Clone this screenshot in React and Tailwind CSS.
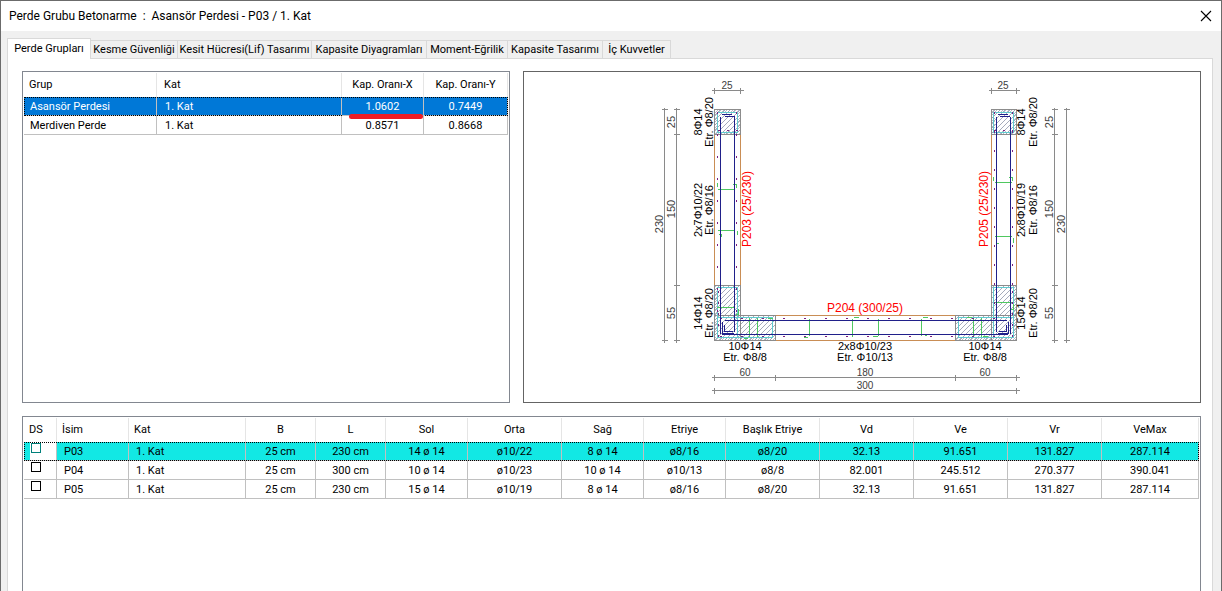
import React, { useState } from 'react';
import clsx from 'clsx';

const tabs = [
  { label: 'Perde Grupları', width: 'w-[84px]' },
  { label: 'Kesme Güvenliği', width: 'w-[87px]' },
  { label: 'Kesit Hücresi(Lif) Tasarımı', width: 'w-[134px]' },
  { label: 'Kapasite Diyagramları', width: 'w-[115px]' },
  { label: 'Moment-Eğrilik', width: 'w-[81px]' },
  { label: 'Kapasite Tasarımı', width: 'w-[95px]' },
  { label: 'İç Kuvvetler', width: 'w-[68px]' },
];

const groups = [
  { name: 'Asansör Perdesi', floor: '1. Kat', x: '1.0602', y: '0.7449' },
  { name: 'Merdiven Perde', floor: '1. Kat', x: '0.8571', y: '0.8668' },
];

const columns = [
  { label: 'DS', width: 'w-[33px]' },
  { label: 'İsim', width: 'w-[72px]' },
  { label: 'Kat', width: 'w-[117px]' },
  { label: 'B', width: 'w-[70px]' },
  { label: 'L', width: 'w-[70px]' },
  { label: 'Sol', width: 'w-[82px]' },
  { label: 'Orta', width: 'w-[94px]' },
  { label: 'Sağ', width: 'w-[82px]' },
  { label: 'Etriye', width: 'w-[82px]' },
  { label: 'Başlık Etriye', width: 'w-[94px]' },
  { label: 'Vd', width: 'w-[94px]' },
  { label: 'Ve', width: 'w-[94px]' },
  { label: 'Vr', width: 'w-[94px]' },
  { label: 'VeMax', width: 'w-[97px]' },
];

const walls = [
  ['P03', '1. Kat', '25 cm', '230 cm', '14 ø 14', 'ø10/22', '8 ø 14', 'ø8/16', 'ø8/20', '32.13', '91.651', '131.827', '287.114'],
  ['P04', '1. Kat', '25 cm', '300 cm', '10 ø 14', 'ø10/23', '10 ø 14', 'ø10/13', 'ø8/8', '82.001', '245.512', '270.377', '390.041'],
  ['P05', '1. Kat', '25 cm', '230 cm', '15 ø 14', 'ø10/19', '8 ø 14', 'ø8/16', 'ø8/20', '32.13', '91.651', '131.827', '287.114'],
];

const GroupTable = () => {
  const [selected, setSelected] = useState(0);

  return (
    <div className="border border-[#828790] bg-white p-px h-[332px]">
      <table className="w-full table-fixed border-separate border-spacing-0">
        <thead>
          <tr className="h-6">
            <th className="w-[133px] border-r border-[#e5e5e5] px-[5px] text-left font-normal">Grup</th>
            <th className="border-r border-[#e5e5e5] px-[7px] text-left font-normal">Kat</th>
            <th className="w-[82px] border-r border-[#e5e5e5] font-normal">Kap. Oranı-X</th>
            <th className="w-[84px] border-r border-[#e5e5e5] font-normal">Kap. Oranı-Y</th>
          </tr>
        </thead>
        <tbody>
          {groups.map((g, i) => (
            <tr
              key={g.name}
              onClick={() => setSelected(i)}
              className={clsx(
                'h-[19px] leading-4',
                selected === i && 'bg-[#0078d7] text-white outline-1 -outline-offset-1 outline-dotted outline-black'
              )}
            >
              <td className="border-r border-b border-[#c0c0c0] px-1.5 pt-0.5">{g.name}</td>
              <td className="border-r border-b border-[#c0c0c0] px-2 pt-0.5">{g.floor}</td>
              <td className="relative border-r border-b border-[#c0c0c0] pt-0.5 text-center">
                {g.x}
                {i === 0 && (
                  <span className="absolute left-[7px] right-0 -bottom-1 z-10 h-[5px] rounded-sm bg-[#ed1c24]" />
                )}
              </td>
              <td className="border-r border-b border-[#c0c0c0] pt-0.5 text-center">{g.y}</td>
            </tr>
          ))}
        </tbody>
      </table>
    </div>
  );
};

const WallTable = () => {
  const [selected, setSelected] = useState(0);

  return (
    <div className="min-h-0 flex-1 border border-b-0 border-[#828790] bg-white p-px">
      <table className="w-full table-fixed border-separate border-spacing-0">
        <thead>
          <tr className="h-6">
            {columns.map((c, i) => (
              <th
                key={c.label}
                className={clsx(c.width, 'border-r border-[#e5e5e5] font-normal', i < 3 ? 'px-[5px] text-left' : 'text-center')}
              >
                {c.label}
              </th>
            ))}
          </tr>
        </thead>
        <tbody>
          {walls.map((row, i) => (
            <tr
              key={row[0]}
              onClick={() => setSelected(i)}
              className={clsx(
                'h-[19px] leading-4',
                selected === i && 'bg-[#12e8e4] outline-1 -outline-offset-1 outline-dotted outline-black'
              )}
            >
              <td className="border-r border-b border-[#c0c0c0] p-0 pl-1.5 align-top">
                <div className="flex h-[18px] items-start bg-white pt-px pl-px">
                  <input
                    type="checkbox"
                    aria-label={`DS ${row[0]}`}
                    className={clsx(
                      'size-2.5 appearance-none border bg-white checked:bg-black',
                      selected === i ? 'border-[#00807a]' : 'border-black'
                    )}
                  />
                </div>
              </td>
              {row.map((value, j) => (
                <td
                  key={j}
                  className={clsx('border-r border-b border-[#c0c0c0] pt-0.5', j < 2 ? 'px-[7px] text-left' : 'text-center')}
                >
                  {value}
                </td>
              ))}
            </tr>
          ))}
        </tbody>
      </table>
    </div>
  );
};

// Text running upwards, centred on y with its baseline on x
const Upright = ({ x, y, children, ...rest }) => (
  <text transform={`translate(${x} ${y}) rotate(-90)`} textAnchor="middle" {...rest}>
    {children}
  </text>
);

const DimV = ({ x, stops }) => (
  <g>
    <path d={`M${x} ${stops[0] - 2}V${stops[stops.length - 1] + 2}`} />
    {stops.map((y) => (
      <path key={y} d={`M${x - 3} ${y}h6`} />
    ))}
  </g>
);

const DimH = ({ y, stops }) => (
  <g>
    <path d={`M${stops[0] - 3} ${y}H${stops[stops.length - 1] + 3}`} />
    {stops.map((x) => (
      <path key={x} d={`M${x} ${y - 3}v6`} />
    ))}
  </g>
);

const SectionDrawing = () => (
  <div className="h-[332px] border border-[#646464] bg-white">
    <svg viewBox="524 72 676 330" className="h-full w-full" role="img" aria-label="P203 / P204 / P205" fontSize="11">
      <defs>
        <pattern id="hatch" width="5" height="5" patternUnits="userSpaceOnUse">
          <path d="M-1 6L6 -1M-1 1L1 -1M4 6L6 4" stroke="#8e96aa" strokeWidth="0.8" />
        </pattern>
        <pattern id="cover" width="3" height="3" patternUnits="userSpaceOnUse">
          <path d="M-1 4L4 -1" stroke="#9a9fad" strokeWidth="0.7" />
        </pattern>
      </defs>

      {/* concrete outline */}
      <g fill="none" stroke="#c98d55" shapeRendering="crispEdges">
        <path d="M714.5 134V286M740.5 134V286M991.5 134V286M1016.5 134V286" />
        <path d="M775 315.5H956M714 340.5H1017" />
      </g>

      {/* boundary zones */}
      <g fill="url(#hatch)" stroke="#8c8c8c" shapeRendering="crispEdges">
        <path d="M714.5 109.5h26v25h-26zM991.5 109.5h25v25h-25z" />
        <path d="M714.5 285.5h26v55h-26zM991.5 285.5h25v55h-25z" />
        <path d="M740.5 315.5h35v25h-35zM955.5 315.5h36v25h-36z" />
        <path d="M714.5 315.5h26M991.5 315.5h25" />
      </g>
      <g fill="url(#cover)">
        <path fillRule="evenodd" d="M715 110h25v24h-25zM718 113v18h19v-18z" />
        <path fillRule="evenodd" d="M992 110h24v24h-24zM995 113v18h18v-18z" />
        <path d="M715 337h60v3h-60zM956 337h60v3h-60zM715 286h3v50h-3zM1013 286h3v50h-3z" />
      </g>

      {/* closed stirrups */}
      <g fill="none" stroke="#62cbd0" shapeRendering="crispEdges">
        <path d="M717.5 112.5h20v20h-20zM993.5 112.5h20v20h-20z" />
        <path d="M717.5 287.5h20v50h-20zM993.5 287.5h20v50h-20z" />
        <path d="M717.5 317.5h55v20h-55zM958.5 317.5h55v20h-55z" />
      </g>

      {/* web ties */}
      <g fill="none" stroke="#4fc860" shapeRendering="crispEdges">
        <path d="M717.5 183v4M718 189.5h17M733 184.5h3v3" />
        <path d="M718 230.5h17M737.5 231v4M719 234.5h2v2" />
        <path d="M717 307.5h18M738.5 309v5h-3" />
        <path d="M993.5 177v4M995 182.5h17M1009 177.5h3v3" />
        <path d="M995 236.5h17M1013.5 238v5M996.5 240v3h2" />
        <path d="M994 302.5h18M1013.5 304v5h-3" />
        <path d="M749.5 318v19M757.5 318v19M744 338.5h4M768 318.5h5" />
        <path d="M809.5 319v17M804 337.5h4M852.5 319v18M854 317.5h5M878.5 319v17M873 336.5h5" />
        <path d="M921.5 319v17M923 317.5h5M925 335.5h2" />
        <path d="M973.5 318v19M981.5 318v19M967 317.5h5M983 336.5h5" />
      </g>

      {/* bar dots */}
      <g fill="none" stroke="#7c2080" strokeWidth="1" shapeRendering="crispEdges">
        <path d="M717.5 112V316" strokeDasharray="2 20" />
        <path d="M736.5 112V316" strokeDasharray="2 20" />
        <path d="M994.5 112V316" strokeDasharray="2 17" />
        <path d="M1012.5 112V316" strokeDasharray="2 17" />
        <path d="M720 318.5H1010" strokeDasharray="2 19" />
        <path d="M720 336.5H1010" strokeDasharray="2 19" />
        <path d="M718.5 291V338M1012.5 291V338" strokeDasharray="2 9" />
        <path d="M718 130.500H738M994 130.500H1013" strokeDasharray="2 7" />
      </g>

      {/* longitudinal bars */}
      <g fill="none" stroke="#20208a" shapeRendering="crispEdges">
        <path d="M720.5 117V334M734.5 117V332M996.5 117V332M1010.5 117V334" />
        <path d="M725 320.5H1007M722 334.5H1008" />
        <path d="M722 114.5h10M725 116.5h10M998 114.5h10M1000 116.5h10" />
        <path d="M722.5 322v11h11M724.5 325v6h8M1008.5 322v11h-11M1006.5 325v6h-8" />
      </g>

      {/* dimension lines */}
      <g fill="none" stroke="#8a8a8a" shapeRendering="crispEdges">
        <DimV x={664.5} stops={[109.5, 340.5]} />
        <DimV x={676.5} stops={[109.5, 134.5, 285.5, 340.5]} />
        <DimV x={1054.5} stops={[109.5, 134.5, 285.5, 340.5]} />
        <DimV x={1066.5} stops={[109.5, 340.5]} />
        <DimH y={90.5} stops={[714.5, 740.5]} />
        <DimH y={90.5} stops={[991.5, 1016.5]} />
        <DimH y={377.5} stops={[714.5, 775.5, 955.5, 1016.5]} />
        <DimH y={390.5} stops={[714.5, 1016.5]} />
      </g>

      <g fill="#404040">
        <Upright x={675} y={122}>25</Upright>
        <Upright x={675} y={209}>150</Upright>
        <Upright x={675} y={313}>55</Upright>
        <Upright x={663} y={224}>230</Upright>
        <Upright x={1053} y={122}>25</Upright>
        <Upright x={1053} y={209}>150</Upright>
        <Upright x={1053} y={313}>55</Upright>
        <Upright x={1065} y={224}>230</Upright>
        <g textAnchor="middle" fontSize="10">
          <text x="727" y="89">25</text>
          <text x="1003" y="89">25</text>
          <text x="745" y="376">60</text>
          <text x="865" y="376">180</text>
          <text x="985" y="376">60</text>
          <text x="865" y="389">300</text>
        </g>
      </g>

      <g fill="#000">
        <Upright x={702} y={122}>8Φ14</Upright>
        <Upright x={713} y={122}>Etr. Φ8/20</Upright>
        <Upright x={702} y={210}>2x7Φ10/22</Upright>
        <Upright x={713} y={210}>Etr. Φ8/16</Upright>
        <Upright x={702} y={313}>14Φ14</Upright>
        <Upright x={713} y={313}>Etr. Φ8/20</Upright>
        <Upright x={1025} y={122}>8Φ14</Upright>
        <Upright x={1037} y={122}>Etr. Φ8/20</Upright>
        <Upright x={1025} y={210}>2x8Φ10/19</Upright>
        <Upright x={1037} y={210}>Etr. Φ8/16</Upright>
        <Upright x={1025} y={313}>15Φ14</Upright>
        <Upright x={1037} y={313}>Etr. Φ8/20</Upright>
        <g textAnchor="middle">
          <text x="745" y="350">10Φ14</text>
          <text x="745" y="361">Etr. Φ8/8</text>
          <text x="865" y="350">2x8Φ10/23</text>
          <text x="865" y="361">Etr. Φ10/13</text>
          <text x="985" y="350">10Φ14</text>
          <text x="985" y="361">Etr. Φ8/8</text>
        </g>
      </g>

      <g fill="#f00" fontSize="12">
        <Upright x={751} y={209}>P203 (25/230)</Upright>
        <Upright x={988} y={209}>P205 (25/230)</Upright>
        <text x="865" y="312" textAnchor="middle">P204 (300/25)</text>
      </g>
    </svg>
  </div>
);

const App = () => {
  const [activeTab, setActiveTab] = useState(0);

  return (
    <div className="flex h-screen flex-col overflow-hidden border-x border-t border-[#6b6b6b] bg-[#f0f0f0] font-[Roboto,'Noto_Sans',sans-serif] text-[11px] text-black">
      <header className="flex h-[30px] shrink-0 items-center justify-between bg-white pr-[9px] pl-2">
        <h1 className="text-xs whitespace-pre">Perde Grubu Betonarme  :  Asansör Perdesi - P03 / 1. Kat</h1>
        <button aria-label="Kapat" className="flex size-3 items-center justify-center">
          <svg viewBox="0 0 12 12" className="size-3" fill="none" stroke="#000" strokeWidth="1.1">
            <path d="M1 1L11 11M11 1L1 11" />
          </svg>
        </button>
      </header>

      <div role="tablist" className="z-10 mt-[7px] -mb-px flex h-[21px] shrink-0 items-end px-1.5">
        {tabs.map((tab, i) => (
          <button
            key={tab.label}
            role="tab"
            aria-selected={activeTab === i}
            onClick={() => setActiveTab(i)}
            className={clsx(
              tab.width,
              'flex shrink-0 justify-center border-[#d9d9d9] whitespace-nowrap',
              activeTab === i
                ? 'h-[21px] border-x border-t bg-white leading-[19px]'
                : 'h-[19px] border-y border-r bg-[#f0f0f0] leading-[18px]'
            )}
          >
            {tab.label}
          </button>
        ))}
      </div>

      <main className="mr-2 ml-1.5 flex min-h-0 flex-1 flex-col gap-[13px] border border-b-0 border-[#d9d9d9] bg-white pt-3 pr-[11px] pl-3.5">
        <div className="grid grid-cols-[488fr_678fr] gap-[13px]">
          <GroupTable />
          <div className="font-['Liberation_Sans',Arial,sans-serif]">
            <SectionDrawing />
          </div>
        </div>
        <WallTable />
      </main>
    </div>
  );
};

export default App;
